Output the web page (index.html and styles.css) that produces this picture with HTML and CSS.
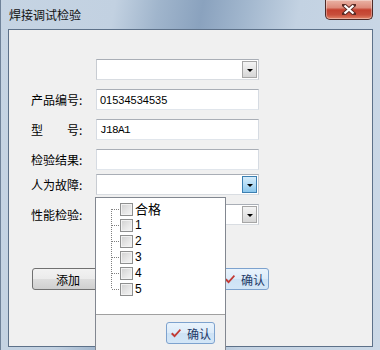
FILE: index.html
```html
<!DOCTYPE html>
<html lang="zh-CN">
<head>
  <meta charset="UTF-8" />
  <title>焊接调试检验</title>
  <link rel="stylesheet" href="styles.css">
</head>
<body>
  <div class="window">
    <div class="titlebar">
      <span class="title">焊接调试检验</span>
      <div class="close">
        <svg width="14" height="11" viewBox="0 0 14 11">
          <path d="M2 1 L12 10 M12 1 L2 10" stroke="#5a2a24" stroke-width="4" stroke-linecap="square" />
          <path d="M2.5 1.5 L11.5 9.5 M11.5 1.5 L2.5 9.5" stroke="#fff" stroke-width="2.2" />
        </svg>
      </div>
    </div>

    <div class="client">
      <div class="form">
        <div class="row">
          <span class="label"></span>
          <div class="field combo">
            <span class="value"></span>
            <span class="drop"><i class="arrow"></i></span>
          </div>
        </div>
        <div class="row">
          <span class="label">产品编号:</span>
          <div class="field"><span class="value num">01534534535</span></div>
        </div>
        <div class="row">
          <span class="label">型<span class="spacer"></span>号:</span>
          <div class="field"><span class="value mono">J18A1</span></div>
        </div>
        <div class="row">
          <span class="label">检验结果:</span>
          <div class="field"><span class="value"></span></div>
        </div>
        <div class="row tight">
          <span class="label">人为故障:</span>
          <div class="field combo">
            <span class="value"></span>
            <span class="drop hot"><i class="arrow"></i></span>
          </div>
        </div>
        <div class="row">
          <span class="label">性能检验:</span>
          <div class="field combo">
            <span class="value"></span>
            <span class="drop"><i class="arrow"></i></span>
          </div>
        </div>
      </div>

      <div class="actions">
        <button class="btn">添加</button>
        <button class="btn btn-hot">
          <svg class="tick" width="10" height="9" viewBox="0 0 10 9"><polygon points="0,5 1.5,3.6 3.6,5.8 8.8,0 10,1.2 3.6,8.6" fill="#c23a34" /></svg>
          确认
        </button>
      </div>

      <div class="popup">
        <ul class="tree" id="tree"></ul>
        <div class="popup-foot">
          <button class="btn btn-hot">
            <svg class="tick" width="10" height="9" viewBox="0 0 10 9"><polygon points="0,5 1.5,3.6 3.6,5.8 8.8,0 10,1.2 3.6,8.6" fill="#c23a34" /></svg>
            确认
          </button>
        </div>
      </div>
    </div>
  </div>

  <script>
    const items = ["合格", "1", "2", "3", "4", "5"];
    const tree = document.getElementById("tree");
    items.forEach((name, i) => {
      const li = document.createElement("li");
      let cls = "branch";
      if (i === 0) cls += " first";
      if (i === items.length - 1) cls += " last";
      li.innerHTML = `<span class="${cls}"></span><span class="check"></span><span class="item-text${i === 0 ? " big" : ""}">${name}</span>`;
      tree.appendChild(li);
    });
  </script>
</body>
</html>
```

FILE: styles.css
```css
body { margin: 0; width: 380px; height: 350px; overflow: hidden; font-family: "Noto Sans CJK SC", "Liberation Sans", sans-serif; font-size: 12px; color: #000; }

.window { box-sizing: border-box; width: 380px; height: 350px; padding: 0 7px 0 7px; border-left: 1px solid #6f8299; background: linear-gradient(100deg, #c6d4e3 0%, #c2d1e1 26%, #a0b5cc 36%, #8aa2be 46%, #a2b7ce 56%, #c3d2e2 68%, #ccd9e7 100%); }

.titlebar { display: flex; align-items: flex-start; height: 29px; }
.title { margin-top: 6px; margin-left: 1px; line-height: 18px; color: #111; }
.close { margin-left: auto; width: 46px; height: 19px; display: flex; align-items: center; justify-content: center; border: 1px solid #4d2a27; border-top: none; border-radius: 0 0 5px 5px; background: linear-gradient(#eab3a5 0%, #dd8b7b 40%, #c4412f 52%, #c84f3b 78%, #e2866a 100%); box-shadow: inset 0 0 0 1px rgba(255,255,255,0.35); }

.client { position: relative; box-sizing: border-box; width: 365px; height: 318px; border: 1px solid #5d7189; background: #f0f0f0; }

.form { padding-top: 29px; }
.row { display: flex; align-items: center; height: 21px; margin-top: 9px; }
.row:first-child { margin-top: 0; }
.row.tight { margin-top: 4px; }
.label { box-sizing: border-box; width: 87px; padding-left: 22px; display: flex; align-items: center; }
.spacer { display: inline-block; width: 24px; }

.field { box-sizing: border-box; width: 163px; height: 21px; display: flex; align-items: center; background: #fff; border: 1px solid; border-color: #a9aeb6 #d6dbe2 #e1e6ec #d6dbe2; }
.value { flex: 1; padding-left: 3px; }
.num { font-family: "Liberation Sans", sans-serif; font-size: 11px; }
.mono { font-family: "Liberation Mono", monospace; font-size: 11px; letter-spacing: -0.6px; color: #000; }

.combo { border-color: #a9aeb6 #c8ccd2 #d9dde2 #c8ccd2; }
.drop { box-sizing: border-box; width: 15px; height: 17px; margin-right: 1px; display: flex; align-items: center; justify-content: center; border: 1px solid #a6a6a6; background: linear-gradient(#f4f4f4 0%, #e6e6e6 50%, #d6d6d6 100%); }
.drop.hot { border-color: #3c7fb1; background: linear-gradient(#d6ecfa 0%, #b4dcf5 50%, #8ac6ec 100%); }
.arrow { width: 0; height: 0; border-left: 3px solid transparent; border-right: 3px solid transparent; border-top: 3px solid #000; margin-top: 1px; }

.actions { display: flex; gap: 116px; margin-top: 43px; padding-left: 23px; }
.btn { box-sizing: border-box; height: 22px; padding: 0; display: flex; align-items: center; justify-content: center; gap: 6px; font-family: inherit; font-size: 12px; color: #000; border: 1px solid #707070; border-radius: 3px; background: linear-gradient(#f2f2f2 0%, #ebebeb 50%, #dddddd 51%, #cfcfcf 100%); }
.actions .btn:first-child { width: 72px; }
.btn-hot { width: 49px; color: #1e3966; border-color: #7da2ce; background: linear-gradient(#e9f3fc 0%, #dcebf9 50%, #cde2f5 51%, #d3e6f7 100%); }
.tick { margin-left: 1px; }

.popup { position: absolute; left: 86px; top: 167px; box-sizing: border-box; width: 131px; height: 160px; border: 1px solid #828790; background: #f0f0f0; }
.tree { list-style: none; margin: 0; padding: 3px 0 0; height: 117px; box-sizing: border-box; background: #fff; border-bottom: 1px solid #a0a0a0; }
.tree li { display: flex; align-items: center; height: 16px; }
.branch { align-self: stretch; width: 9px; margin-left: 15px; background: repeating-linear-gradient(90deg, #808080 0 1px, transparent 1px 2px) right 50% / 8px 1px no-repeat, repeating-linear-gradient(180deg, #808080 0 1px, transparent 1px 2px) left top / 1px 100% no-repeat; }
.branch.first { background-position: right 50%, left bottom; background-size: 8px 1px, 1px 50%; }
.branch.last { background-size: 8px 1px, 1px 50%; }
.check { box-sizing: border-box; width: 13px; height: 13px; border: 1px solid #8e8f8f; background: linear-gradient(135deg, #cfcfcf 0%, #e4e4e4 50%, #f6f6f6 100%); box-shadow: inset 0 0 0 1px #f2f2f2; }
.item-text { margin-left: 2px; font-family: "Liberation Sans", "Noto Sans CJK SC", sans-serif; font-size: 12px; line-height: 14px; }
.item-text.big { font-family: "Noto Sans CJK SC", sans-serif; font-size: 13px; }

.popup-foot { display: flex; justify-content: flex-end; padding: 7px 10px 0 0; }
```
